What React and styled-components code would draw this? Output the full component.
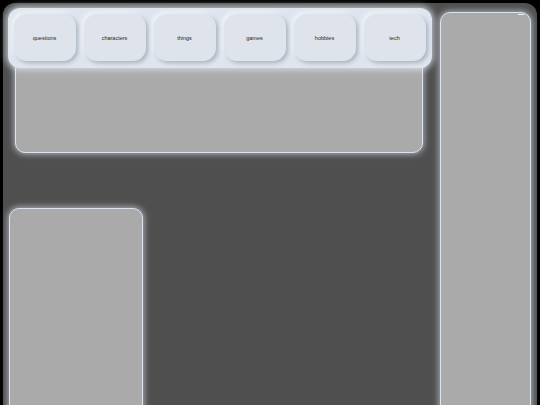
import React from "react";
import styled, { createGlobalStyle } from "styled-components";

const Global = createGlobalStyle`
    html, body {
        margin: 0;
        padding: 0;
        background: #000;
        overflow: hidden;
    }
    * { box-sizing: border-box; }
`;

const Frame = styled.div`
    margin: 3px;
    height: 460px;
    border-radius: 12px;
    background: #4f4f4f;
    display: grid;
    grid-template-columns: 424px 91px;
    column-gap: 8px;
    padding: 5px 0 0 5px;
    font-family: "Liberation Sans", Arial, sans-serif;
`;

const LeftColumn = styled.div`
    display: flex;
    flex-direction: column;
    align-items: flex-start;
`;

const NavBar = styled.div`
    position: relative;
    z-index: 1;
    width: 424px;
    height: 60px;
    background: #dfe5ee;
    border-radius: 12px;
    padding: 6px 0 0 6px;
    display: flex;
    gap: 8px;
    box-shadow: 0 0 6px 2px rgba(225, 232, 242, 0.75);
`;

const NavButton = styled.div`
    width: 62px;
    height: 47px;
    border-radius: 13px;
    background: #dfe4ec;
    display: flex;
    align-items: center;
    justify-content: center;
    padding-right: 1px;
    font-size: 5.5px;
    color: #1e1e1e;
    box-shadow: 2px 2px 4px #a9b1c0, -2px -2px 4px #f3f6fb;
`;

const Panel = styled.div`
    background: #aaaaaa;
    border: 1.5px solid #dde3ec;
    border-radius: ${(p) => p.radius || "10px"};
    box-shadow: 0 0 6px 1px rgba(215, 224, 238, 0.7);
    width: ${(p) => p.w};
    height: ${(p) => p.h};
    margin: ${(p) => p.m || "0"};
`;

const SidePanel = styled(Panel)`
    position: relative;
    margin-top: 4px;
`;

const CloseMark = styled.span`
    position: absolute;
    top: 1px;
    right: 6px;
    width: 6px;
    height: 1px;
    background: #eef2f8;
`;

const tabs = ["questions", "characters", "things", "games", "hobbies", "tech"];

export default function App() {
    return (
        <>
            <Global />
            <Frame>
                <LeftColumn>
                    <NavBar>
                        {tabs.map((t) => (
                            <NavButton key={t}>{t}</NavButton>
                        ))}
                    </NavBar>
                    <Panel w="408px" h="97px" m="-12px 0 0 7px" radius="0 0 10px 10px" />
                    <Panel w="134px" h="260px" m="55px 0 0 1px" />
                </LeftColumn>
                <SidePanel w="91px" h="440px">
                    <CloseMark />
                </SidePanel>
            </Frame>
        </>
    );
}
